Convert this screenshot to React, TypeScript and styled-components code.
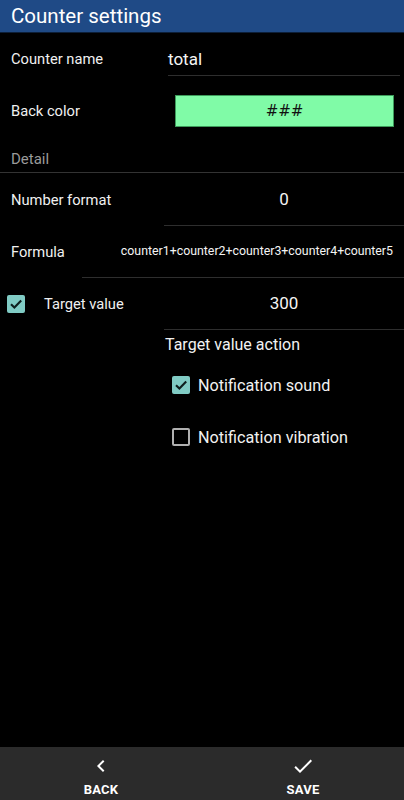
import React from "react";
import styled, { createGlobalStyle } from "styled-components";

const Global = createGlobalStyle`
  html, body { margin: 0; padding: 0; background: #000; }
  body { font-family: Roboto, "Noto Sans", "Liberation Sans", sans-serif; color: #f2f2f2; }
  #root { min-height: 800px; }
`;

const Screen = styled.div`
  width: 404px;
  height: 800px;
  display: flex;
  flex-direction: column;
  background: #000;
  overflow: hidden;
`;

const Header = styled.header`
  height: 32px;
  background: #1f4a86;
  border-bottom: 1px solid #0d1f38;
  display: flex;
  align-items: center;
  padding-left: 11px;
  font-size: 20.5px;
  color: #fff;
`;

const Content = styled.main`
  flex: 1;
  display: flex;
  flex-direction: column;
`;

const Row = styled.div<{ $h?: number; $cols?: string }>`
  height: ${(p) => p.$h ?? 52}px;
  display: grid;
  grid-template-columns: ${(p) => p.$cols ?? "164px 1fr"};
  align-items: center;
`;

const Label = styled.div<{ $pad?: number }>`
  padding-left: ${(p) => p.$pad ?? 11}px;
  font-size: 14.7px;
  color: #f0f0f0;
  display: flex;
  align-items: center;
`;

const Field = styled.div<{ $h: number; $ml?: number; $mr?: number; $align?: string; $size?: number; $pr?: number }>`
  height: ${(p) => p.$h}px;
  margin-left: ${(p) => p.$ml ?? 0}px;
  margin-right: ${(p) => p.$mr ?? 0}px;
  padding-right: ${(p) => p.$pr ?? 0}px;
  border-bottom: 1px solid #2e2e2e;
  display: flex;
  align-items: center;
  justify-content: ${(p) => p.$align ?? "center"};
  font-size: ${(p) => p.$size ?? 17}px;
  color: #f4f4f4;
  align-self: ${(p) => (p.$h >= 52 ? "end" : "center")};
  white-space: nowrap;
`;

const ColorBox = styled.div`
  margin: 0 10px 0 11px;
  height: 30px;
  background: #80fba7;
  border: 1px solid #3d9a5a;
  display: flex;
  align-items: center;
  justify-content: center;
  color: #111;
  font-family: "DejaVu Sans", sans-serif;
  font-size: 15px;
`;

const SectionTitle = styled.div`
  height: 37px;
  box-sizing: border-box;
  border-bottom: 1px solid #333;
  display: flex;
  align-items: flex-end;
  padding: 0 0 4px 11px;
  font-size: 15px;
  color: #9a9a9a;
`;

const Box = styled.span<{ $checked?: boolean }>`
  width: 18px;
  height: 18px;
  box-sizing: border-box;
  border-radius: 2px;
  flex-shrink: 0;
  display: inline-flex;
  align-items: center;
  justify-content: center;
  background: ${(p) => (p.$checked ? "#80cbc4" : "transparent")};
  border: ${(p) => (p.$checked ? "none" : "2px solid #b0b0b0")};
`;

const Check: React.FC<{ checked?: boolean }> = ({ checked }) => (
  <Box $checked={checked}>
    {checked && (
      <svg width="18" height="18" viewBox="0 0 18 18">
        <polyline points="4,9.2 7.4,12.6 14.2,5.6" fill="none" stroke="#0e1f1e" strokeWidth="2.1" />
      </svg>
    )}
  </Box>
);

const CheckLabel = styled.div<{ $gap: number }>`
  display: flex;
  align-items: center;
  gap: ${(p) => p.$gap}px;
`;

const ActionBlock = styled.div`
  padding-left: 165px;
  display: flex;
  flex-direction: column;
`;

const ActionTitle = styled.div`
  height: 30px;
  display: flex;
  align-items: center;
  font-size: 16px;
  color: #f2f2f2;
`;

const ActionRow = styled.div`
  height: 52px;
  display: flex;
  align-items: center;
  padding-left: 7px;
  gap: 8px;
  font-size: 16.2px;
  color: #f2f2f2;
`;

const BottomBar = styled.footer`
  height: 53px;
  background: #2b2b2b;
  display: grid;
  grid-template-columns: 1fr 1fr;
`;

const BarButton = styled.button`
  background: none;
  border: none;
  color: #fff;
  font-family: Roboto, "Liberation Sans", sans-serif;
  font-weight: 700;
  font-size: 13px;
  display: flex;
  flex-direction: column;
  align-items: center;
  justify-content: flex-start;
  padding: 7px 0 0;
  gap: 4px;
  letter-spacing: 0.2px;
`;

export default function App() {
  return (
    <>
      <Global />
      <Screen>
        <Header>Counter settings</Header>
        <Content>
          <Row $h={52}>
            <Label>Counter name</Label>
            <Field $h={33} $ml={4} $mr={4} $align="flex-start">total</Field>
          </Row>
          <Row $h={51}>
            <Label>Back color</Label>
            <ColorBox>###</ColorBox>
          </Row>
          <SectionTitle>Detail</SectionTitle>
          <Row>
            <Label>Number format</Label>
            <Field $h={52}>0</Field>
          </Row>
          <Row $cols="82px 1fr">
            <Label>Formula</Label>
            <Field $h={52} $size={12.35} $align="flex-end" $pr={11}>
              counter1+counter2+counter3+counter4+counter5
            </Field>
          </Row>
          <Row>
            <Label $pad={7}>
              <CheckLabel $gap={19}>
                <Check checked />
                <span>Target value</span>
              </CheckLabel>
            </Label>
            <Field $h={52}>300</Field>
          </Row>
          <ActionBlock>
            <ActionTitle>Target value action</ActionTitle>
            <ActionRow>
              <Check checked />
              <span>Notification sound</span>
            </ActionRow>
            <ActionRow>
              <Check />
              <span>Notification vibration</span>
            </ActionRow>
          </ActionBlock>
        </Content>
        <BottomBar>
          <BarButton>
            <svg width="24" height="24" viewBox="0 0 24 24">
              <path d="M15.41 7.41L14 6l-6 6 6 6 1.41-1.41L10.83 12z" fill="#fff" />
            </svg>
            BACK
          </BarButton>
          <BarButton>
            <svg width="24" height="24" viewBox="0 0 24 24">
              <path d="M9 16.17L4.83 12l-1.42 1.41L9 19 21 7l-1.41-1.41z" fill="#fff" />
            </svg>
            SAVE
          </BarButton>
        </BottomBar>
      </Screen>
    </>
  );
}
